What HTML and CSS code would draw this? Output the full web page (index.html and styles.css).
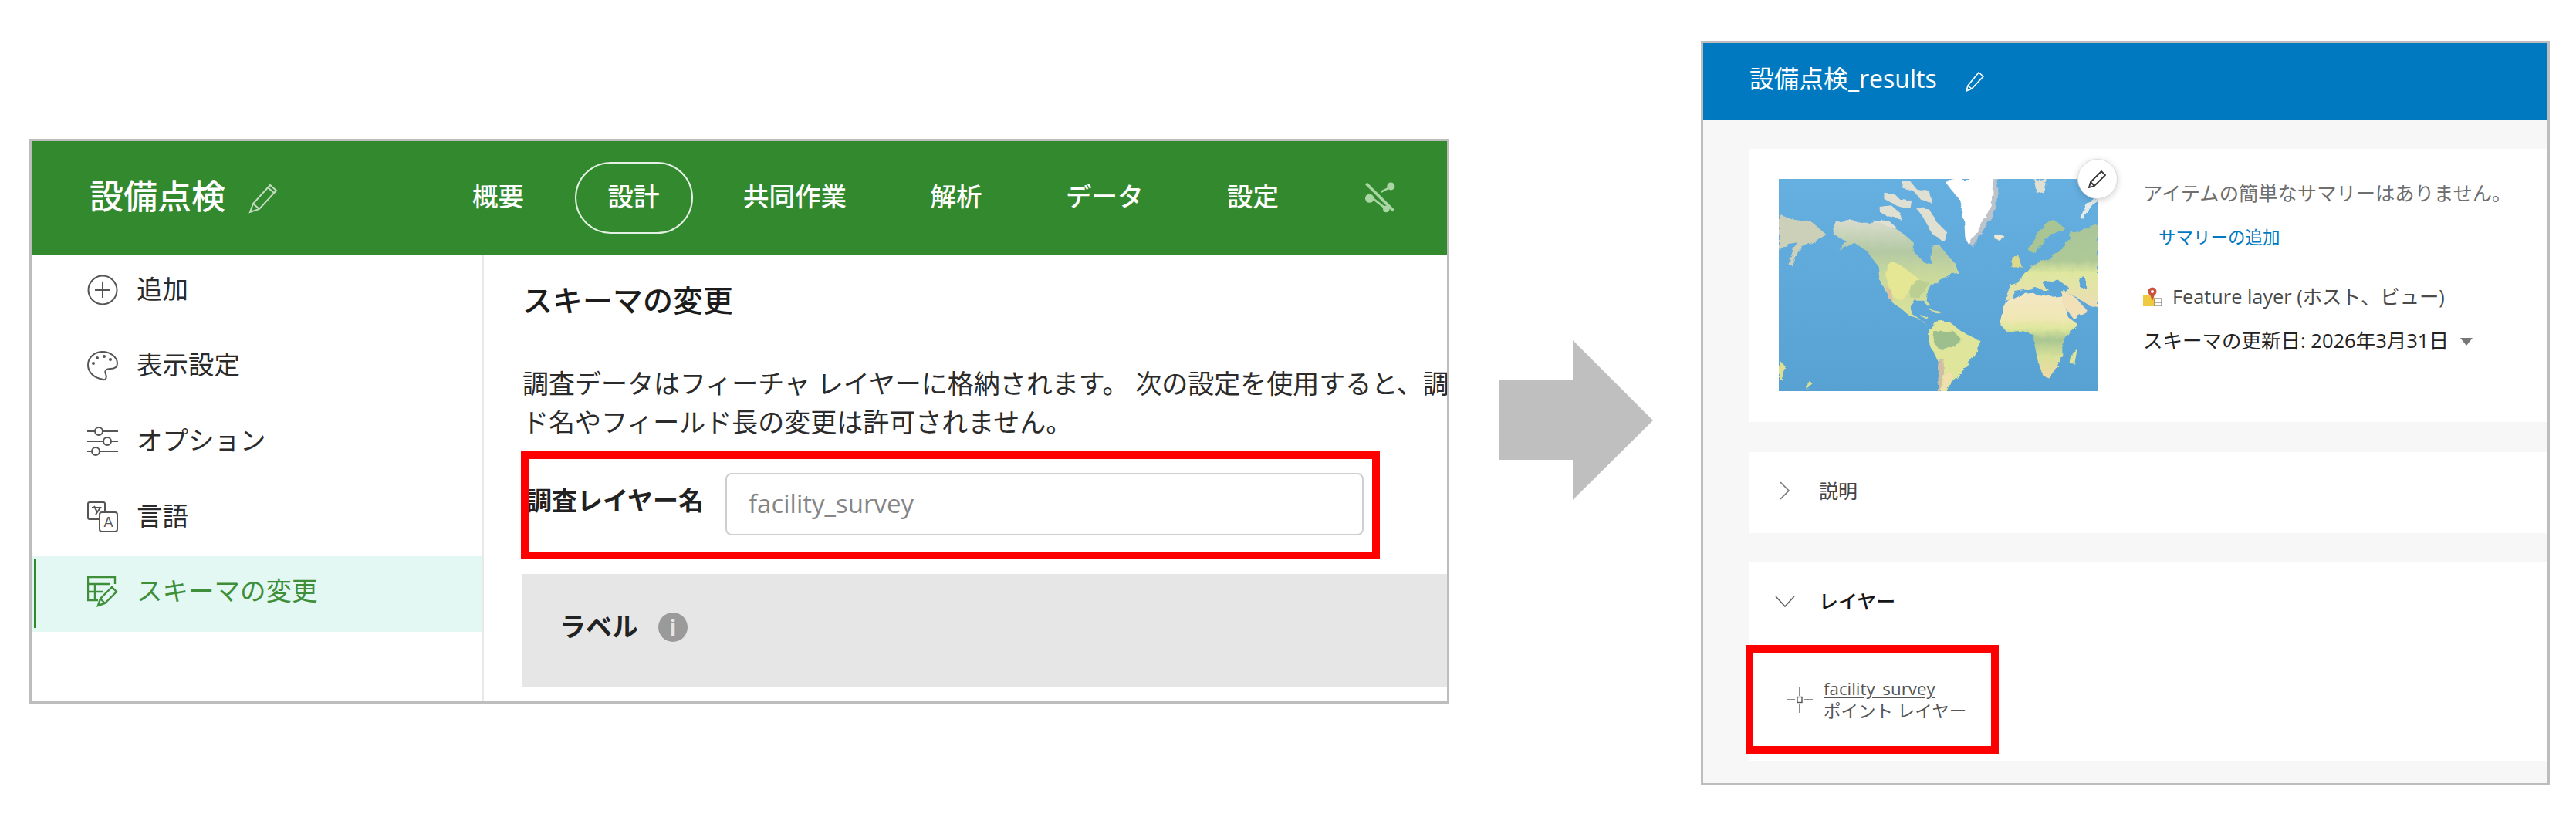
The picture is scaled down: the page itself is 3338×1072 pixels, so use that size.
FILE: index.html
```html
<!DOCTYPE html>
<html lang="ja">
<head>
    <meta charset="UTF-8">
    <title>調査レイヤー名</title>
    <link rel="stylesheet" href="styles.css">
</head>
<body>
    <div class="page">
        <!-- Survey123 side -->
        <section class="designer">
            <header class="designer-head">
                <h1 class="designer-title">設備点検</h1>
                <svg class="title-pencil" viewBox="0 0 40 40"><path d="M3 38l4-11L29 3l8 7-22 24zM7 27l8 7M26 6l8 7" fill="none" stroke="#c4dcc2" stroke-width="2"/></svg>
                <nav class="tabs">
                    <a class="tab">概要</a>
                    <a class="tab tab-on">設計</a>
                    <a class="tab">共同作業</a>
                    <a class="tab">解析</a>
                    <a class="tab">データ</a>
                    <a class="tab">設定</a>
                </nav>
                <svg class="share-icon" viewBox="275 108 120 122">
                    <path d="M282 113l106 106" stroke="#a9d6a4" stroke-width="11" fill="none"/>
                    <circle cx="295" cy="171" r="17" fill="#a9d6a4"/>
                    <circle cx="378" cy="124" r="15" fill="#a9d6a4"/>
                    <circle cx="360" cy="212" r="13" fill="#a9d6a4"/>
                    <path d="M300 165l60 47M375 128l-36 18" stroke="#a9d6a4" stroke-width="8" fill="none"/>
                </svg>
            </header>
            <div class="designer-body">
                <aside class="sidebar">
                    <div class="side-item">
                        <svg class="side-icon" viewBox="0 0 40 40"><g fill="none" stroke="#555" stroke-width="2"><circle cx="20" cy="20" r="18.5"/><path d="M20 10v20M10 20h20"/></g></svg>
                        <span>追加</span>
                    </div>
                    <div class="side-item">
                        <svg class="side-icon" viewBox="0 0 40 40"><path d="M20 2c10 0 19 7 19 15 0 6-5 7-9 7-5 0-8 2-6 7 2 4 0 8-3 7C9 36 1 29 1 19 1 9 10 2 20 2z" fill="none" stroke="#555" stroke-width="2"/><g fill="#555"><circle cx="8" cy="17" r="2"/><circle cx="13" cy="10" r="2"/><circle cx="22" cy="8" r="2"/><circle cx="30" cy="12" r="2"/></g></svg>
                        <span>表示設定</span>
                    </div>
                    <div class="side-item">
                        <svg class="side-icon" viewBox="0 0 40 40"><g fill="#fff" stroke="#555" stroke-width="2"><path d="M0 7h40M0 20h40M0 33h40"/><circle cx="15" cy="7" r="5"/><circle cx="26" cy="20" r="5"/><circle cx="11" cy="33" r="5"/></g></svg>
                        <span>オプション</span>
                    </div>
                    <div class="side-item">
                        <svg class="side-icon" viewBox="0 0 40 40">
                            <g fill="#fff" stroke="#555" stroke-width="2"><rect x="1" y="1" width="22" height="22" rx="2"/><path d="M6 8h11l-6 9M9 6l4 8"/><rect x="16" y="14" width="23" height="25" rx="3"/></g>
                            <text class="lang-a" x="27.5" y="33" text-anchor="middle">A</text>
                        </svg>
                        <span>言語</span>
                    </div>
                    <div class="side-item side-on">
                        <svg class="side-icon" viewBox="0 0 40 40"><g fill="none" stroke="#3f8f3a" stroke-width="2.4"><path d="M36 10V1H1v30h13M1 10h28M1 20h20M10 10v21"/><path d="M14 38l3-9 15-15 6 6-15 15zM17 29l6 6"/></g></svg>
                        <span>スキーマの変更</span>
                    </div>
                </aside>
                <main class="schema">
                    <h2 class="schema-title">スキーマの変更</h2>
                    <p class="schema-text">調査データはフィーチャ レイヤーに格納されます。 次の設定を使用すると、調<br>ド名やフィールド長の変更は許可されません。</p>
                    <div class="layer-row">
                        <label class="layer-label">調査レイヤー名</label>
                        <div class="layer-input">facility_survey</div>
                        <div class="red-box red-box-name"></div>
                    </div>
                    <div class="label-bar">
                        <strong class="label-text">ラベル</strong>
                        <span class="info-dot">i</span>
                    </div>
                </main>
            </div>
        </section>

        <svg class="arrow" viewBox="0 0 200 208"><path d="M1 52h95V0l104 104L96 207v-52H1z" fill="#bfbfbf"/></svg>

        <!-- ArcGIS item page side -->
        <section class="item">
            <header class="item-head">
                <h1 class="item-title">設備点検_results</h1>
                <svg class="item-pencil" viewBox="0 0 26 26"><path d="M2 25l2-7L18 1l6 5L9 22zM4 18l5 4" fill="none" stroke="#fff" stroke-width="1.6"/></svg>
            </header>
            <div class="item-body">
                <div class="card card-top">
                    <div class="thumb">
                        <svg class="map" viewBox="76 97 1238 825" preserveAspectRatio="none">
                            <defs>
                                <linearGradient id="sea" x1="0" y1="0" x2="0" y2="1"><stop offset="0" stop-color="#66afe1"/><stop offset="1" stop-color="#57a1d3"/></linearGradient>
                                <linearGradient id="north" gradientUnits="userSpaceOnUse" x1="0" y1="250" x2="0" y2="680"><stop offset="0" stop-color="#dcddcf"/><stop offset=".3" stop-color="#b3c9a4"/><stop offset=".5" stop-color="#c8d89c"/><stop offset="1" stop-color="#dfe59c"/></linearGradient>
                                <linearGradient id="eurasia" gradientUnits="userSpaceOnUse" x1="0" y1="260" x2="0" y2="600"><stop offset="0" stop-color="#a9c59a"/><stop offset=".45" stop-color="#aec996"/><stop offset=".6" stop-color="#dfe79f"/><stop offset="1" stop-color="#ecddb6"/></linearGradient>
                                <linearGradient id="africa" gradientUnits="userSpaceOnUse" x1="0" y1="540" x2="0" y2="870"><stop offset="0" stop-color="#f3e7c4"/><stop offset=".3" stop-color="#f0e7b4"/><stop offset=".42" stop-color="#dee79c"/><stop offset=".55" stop-color="#a9c692"/><stop offset=".75" stop-color="#d8e199"/><stop offset="1" stop-color="#efd9a4"/></linearGradient>
                                <filter id="rough" x="-5%" y="-5%" width="110%" height="110%">
                                    <feTurbulence type="fractalNoise" baseFrequency="0.035" numOctaves="3" seed="4"/>
                                    <feDisplacementMap in="SourceGraphic" scale="18"/>
                                    <feGaussianBlur stdDeviation="2.2"/>
                                </filter>
                            </defs>
                            <rect x="76" y="97" width="1238" height="825" fill="url(#sea)"/>
                            <g filter="url(#rough)">
                                <!-- arctic islands -->
                                <g fill="#dfdfd2">
                                    <path d="M550 100l40 10 20 25 50 10 10 45-40-10-30-35-40-10z"/>
                                    <path d="M485 150l40 5 20 20 50 10-5 30-45-10-60-30z"/>
                                    <path d="M468 205l45-5 35 30 5 25-50-10-35-20z"/>
                                    <path d="M610 210l50 5 30 50 40 40-15 35-45-30-30-60z"/>
                                    <path d="M672 350l28 5 35 45 30 30 10 35-35 5-50-40-25-30z"/>
                                    <path d="M440 262l60-5 40 35-60-5z"/>
                                    <path d="M1070 100l45-3-10 50-25 8z"/>
                                </g>
                                <!-- greenland -->
                                <path d="M745 97h182l-4 85-18 60-32 50-45 68-20-20-14-90-18-80-30-40z" fill="#bcc3cb"/>
                                <path d="M720 105l40-8h150l-4 85-24 60-30 50-38 60-14-25-4-70-22-85-30-35z" fill="#fff"/>
                                <path d="M915 315l35 2-15 20-18-5z" fill="#eee9d0"/>
                                <path d="M1310 170q-50 20-60 80l12 5q10-50 52-70z" fill="#e3ecea"/>
                                <!-- siberia on the left edge -->
                                <path d="M76 232l50 22 80 12 55 48-55 30-55 25-25 65-12-5 20-65 15-20-35 5-38 25z" fill="#cdd0b8"/>
                                <!-- north america -->
                                <path fill="url(#north)" d="M285 310l15-45 50-10 50 15 70 0 50 15 40 25 40 35 0 35 40 40 30 10-5-50 7-30 28 5 35 45 30 30 10 35-35 5-40 20-30 20-15 30-5 30 15 20-15 0-10-20-40 0-15 20 5 30 30 20 30 25-15-15-55-25-30-25-30-20-25-40-25-50-5-50-45-60-50-35-60 30 30-35z"/>
                                <path fill="#e5e795" d="M510 415l35 15 55 40 30 25-40 30-35 45-30-10-25-50-10-40z"/>
                                <path fill="#bccf92" d="M600 490l60 5-20 40-25 25-30 0 5-40z"/>
                                <path fill="#dcc0a0" d="M490 510l20 20 10 40-20-10z"/>
                                <!-- caribbean -->
                                <path fill="#d3dd9d" d="M650 600l40 8 20 12-30-5zM625 625l30 8 0 6-25-6z"/>
                                <!-- south america -->
                                <path fill="#dfe69b" d="M680 655l55-5 50 40 75 38-28 60-38 50-28 35-30 30-8 20h-28l8-90-50-100 0-45z"/>
                                <path fill="#9dbf8e" d="M680 690l75 0 35 35-40 25-45 15-30-35z"/>
                                <path fill="#d0bfa5" d="M698 800l18-8 2 60-15 70h-10z"/>
                                <path fill="#f1e0ae" d="M720 860l30-10-10 40-25 32h-8z"/>
                                <!-- africa and arabia -->
                                <path fill="url(#africa)" d="M945 610l20-40 50-25 50-5 35 15 60-5 20 5 20 80 40 30-35 25-25 45 0 50-35 60-22 25-22-10-20-60-12-60 0-35-40-15-65 5-30-35z"/>
                                <path fill="#f2e0b8" d="M1175 530l55 30 45 50-55 30-40-55z"/>
                                <path fill="#dde49a" d="M1215 770l20-10-10 55-17 0z"/>
                                <!-- europe and asia -->
                                <path fill="url(#eurasia)" d="M975 510l30-10 20-30 35-40 70-30 60-40 20-50 60-20 44-15v320l-30-5-55-35-70-25-55 0-30-10-50 10-30 5-15 30-25 5z"/>
                                <path fill="#a9c594" d="M1045 375l50-85 45-35 50 35-60 25-30 30-25 40z"/>
                                <path fill="#dcd98c" d="M985 410l20-20 15 50-35 5z"/>
                                <path fill="#5da6d8" d="M1100 498l60-8 45 30-15 15-45 5-35-20z"/>
                                <path fill="#5da6d8" d="M1240 480l25-5 5 45-20 5z"/>
                                <!-- bits of the far west -->
                                <path fill="#dde093" d="M76 800l29 30-20 50h-9z"/>
                                <path fill="#dde093" d="M190 880l20 15-25 22z"/>
                            </g>
                        </svg>
                        <button class="thumb-edit">
                            <svg viewBox="0 0 26 26"><path d="M2 24l2-7L18 3l5 5L9 22zM4 17l5 5" fill="none" stroke="#333" stroke-width="1.8"/></svg>
                        </button>
                    </div>
                    <div class="meta">
                        <p class="meta-line meta-none">アイテムの簡単なサマリーはありません。</p>
                        <a class="meta-add">サマリーの追加</a>
                        <p class="meta-line meta-type">
                            <svg class="type-icon" viewBox="0 0 25 25"><path d="M0 10h10l5 4v11H0z" fill="#efc93f"/><circle cx="12" cy="6" r="5.5" fill="#c9523f"/><circle cx="12" cy="6" r="2" fill="#fff"/><path d="M9 10l3 8 3-8z" fill="#c9523f"/><rect x="15" y="15" width="9" height="10" fill="#fff" stroke="#666"/><path d="M15 20h9" stroke="#666"/></svg>
                            Feature layer (ホスト、ビュー)
                        </p>
                        <p class="meta-line meta-date">スキーマの更新日: 2026年3月31日<span class="caret"></span></p>
                    </div>
                </div>
                <div class="card card-desc">
                    <div class="fold">
                        <svg class="chev" viewBox="0 0 30 24"><path d="M9 1l11 11L9 23" fill="none" stroke="#777" stroke-width="1.6"/></svg>
                        <span>説明</span>
                    </div>
                </div>
                <div class="card card-layers">
                    <div class="fold fold-open">
                        <svg class="chev" viewBox="0 0 30 24"><path d="M3 6l12 13L27 6" fill="none" stroke="#666" stroke-width="1.6"/></svg>
                        <span>レイヤー</span>
                    </div>
                    <div class="layer-link">
                        <svg class="point-icon" viewBox="0 0 34 34"><path d="M17 0v12M17 22v12M0 17h11M23 17h11" stroke="#666" stroke-width="1.5"/><rect x="14" y="13.5" width="6" height="7" fill="#fff" stroke="#555" stroke-width="1.4"/></svg>
                        <div class="layer-names">
                            <a class="layer-name">facility_survey</a>
                            <span class="layer-kind">ポイント レイヤー</span>
                        </div>
                        <div class="red-box red-box-link"></div>
                    </div>
                </div>
            </div>
        </section>
    </div>
</body>
</html>
```

FILE: styles.css
```css
* {
    box-sizing: border-box;
}

body {
    margin: 0;
    background: #fff;
    font-family: "Open Sans", "Noto Sans CJK JP", sans-serif;
    color: #222;
}

.page {
    display: flex;
    align-items: flex-start;
    width: 3338px;
    height: 1072px;
    padding-left: 38px;
    overflow: hidden;
}

h1, h2, p {
    margin: 0;
    font-weight: 400;
}

.red-box {
    position: absolute;
    border: 10px solid #f00;
}

/* left window */
.designer {
    flex: none;
    width: 1840px;
    height: 732px;
    margin-top: 180px;
    border: 3px solid #bdbdbd;
    overflow: hidden;
}

.designer-head {
    display: flex;
    align-items: center;
    height: 147px;
    padding-left: 75px;
    background: #338a2e;
    color: #fff;
}

.designer-title {
    font-size: 44px;
    font-weight: 500;
    line-height: 60px;
    margin-bottom: 5px;
}

.title-pencil {
    width: 40px;
    height: 40px;
    margin-left: 29px;
}

.tabs {
    display: flex;
    gap: 22.5px;
    margin-left: 208px;
}

.tab {
    height: 93px;
    padding: 0 41px;
    border: 2px solid transparent;
    border-radius: 47px;
    font-size: 33.5px;
    font-weight: 500;
    line-height: 85px;
}

.tab-on {
    border-color: #e6f1e5;
}

.share-icon {
    width: 40px;
    height: 41px;
    margin-left: 68px;
}

.designer-body {
    display: flex;
    height: 582px;
}

.sidebar {
    flex: none;
    width: 586px;
    border-right: 2px solid #e8e8e8;
}

.side-item {
    position: relative;
    display: flex;
    align-items: center;
    gap: 24px;
    height: 98px;
    padding: 0 0 6px 72px;
    font-size: 33.5px;
    color: #2b2b2b;
}

.side-item span {
    margin-bottom: 7px;
}

.side-icon {
    flex: none;
    width: 40px;
    height: 40px;
}

.lang-a {
    font-size: 18px;
    font-family: "Liberation Sans", sans-serif;
    fill: #555;
}

.side-on {
    margin-top: -1px;
    background: #e4f8f3;
    color: #3f8f3a;
}

.side-on::before {
    content: "";
    position: absolute;
    left: 3px;
    top: 4px;
    bottom: 5px;
    width: 3px;
    background: #2f8a2a;
}

.schema {
    flex: 1;
    padding: 34px 0 0 50px;
    min-width: 0;
    overflow: hidden;
    white-space: nowrap;
}

.schema-title {
    font-size: 39px;
    line-height: 50px;
    font-weight: 500;
    color: #1c1c1c;
}

.schema-text {
    margin-top: 58px;
    font-size: 34px;
    line-height: 50px;
    color: #2b2b2b;
}

.layer-row {
    position: relative;
    display: flex;
    align-items: center;
    margin-top: 41px;
}

.layer-label {
    width: 263px;
    padding: 0 0 10px 5px;
    font-size: 33px;
    font-weight: 700;
    line-height: 60px;
}

.layer-input {
    width: 827px;
    height: 81px;
    padding-left: 28px;
    border: 2px solid #cfcfcf;
    border-radius: 8px;
    font-size: 33px;
    line-height: 75px;
    color: #858585;
}

.red-box-name {
    left: -2px;
    top: -28px;
    width: 1113px;
    height: 140px;
}

.label-bar {
    display: flex;
    align-items: center;
    gap: 26px;
    height: 146px;
    margin-top: 50px;
    padding: 0 0 8px 48px;
    background: #e6e6e6;
    font-size: 34px;
}

.label-text {
    margin-bottom: 6px;
    font-weight: 700;
}

.info-dot {
    width: 38px;
    height: 38px;
    border-radius: 50%;
    background: #9a9a9a;
    color: #e6e6e6;
    font-size: 28px;
    font-weight: 700;
    line-height: 38px;
    text-align: center;
}

.arrow {
    flex: none;
    width: 200px;
    height: 208px;
    margin: 441px 0 0 64px;
}

/* right window */
.item {
    flex: none;
    width: 1100px;
    height: 965px;
    margin: 53px 0 0 62px;
    border: 3px solid #bdbdbd;
    background: #f7f7f7;
    overflow: hidden;
}

.item-head {
    display: flex;
    align-items: center;
    height: 100px;
    padding-left: 60px;
    background: #0079c1;
    color: #fff;
}

.item-title {
    font-size: 32px;
    line-height: 44px;
    margin-bottom: 9px;
}

.item-pencil {
    width: 26px;
    height: 26px;
    margin-left: 36px;
}

.item-body {
    padding: 37px 0 0 59px;
}

.card {
    background: #fff;
}

.card-top {
    display: flex;
    gap: 59px;
    height: 354px;
    padding: 39px 0 0 39px;
}

.thumb {
    position: relative;
    flex: none;
    width: 413px;
    height: 275px;
}

.map {
    display: block;
    width: 413px;
    height: 275px;
}

.thumb-edit {
    position: absolute;
    right: -26px;
    top: -26px;
    width: 52px;
    height: 52px;
    padding: 12px;
    border: 1px solid #ddd;
    border-radius: 50%;
    background: #fff;
    box-shadow: 0 2px 8px rgba(0, 0, 0, 0.18);
}

.thumb-edit svg {
    display: block;
    width: 26px;
    height: 26px;
}

.meta {
    white-space: nowrap;
}

.meta-line {
    font-size: 25px;
    line-height: 36px;
}

.meta-none {
    font-size: 25.3px;
    color: #6e6e6e;
}

.meta-add {
    display: block;
    margin: 22px 0 0 20px;
    font-size: 22.5px;
    line-height: 36px;
    color: #0079c1;
}

.meta-type {
    display: flex;
    align-items: center;
    gap: 13px;
    margin-top: 40px;
    font-size: 25.3px;
    color: #4a4a4a;
}

.type-icon {
    width: 25px;
    height: 25px;
}

.meta-date {
    margin-top: 21px;
    font-size: 25.5px;
    color: #222;
}

.caret {
    display: inline-block;
    margin-left: 15px;
    vertical-align: 3px;
    border-left: 8px solid transparent;
    border-right: 8px solid transparent;
    border-top: 10px solid #777;
}

.card-desc {
    height: 105px;
    margin-top: 39px;
}

.card-layers {
    height: 257px;
    margin-top: 38px;
}

.fold {
    display: flex;
    align-items: center;
    gap: 29px;
    padding: 32px 0 0 32px;
    font-size: 25px;
    line-height: 36px;
    color: #444;
}

.fold-open {
    font-weight: 500;
    color: #151515;
}

.chev {
    width: 30px;
    height: 24px;
}

.layer-link {
    position: relative;
    display: flex;
    align-items: center;
    gap: 14px;
    margin-top: 81px;
    padding-left: 49px;
}

.point-icon {
    width: 34px;
    height: 34px;
}

.layer-names {
    display: flex;
    flex-direction: column;
    font-size: 22.5px;
    line-height: 29px;
    color: #555;
}

.layer-name {
    font-size: 22.3px;
    text-decoration: underline;
}

.red-box-link {
    left: -4px;
    top: -42px;
    width: 328px;
    height: 141px;
}
```
